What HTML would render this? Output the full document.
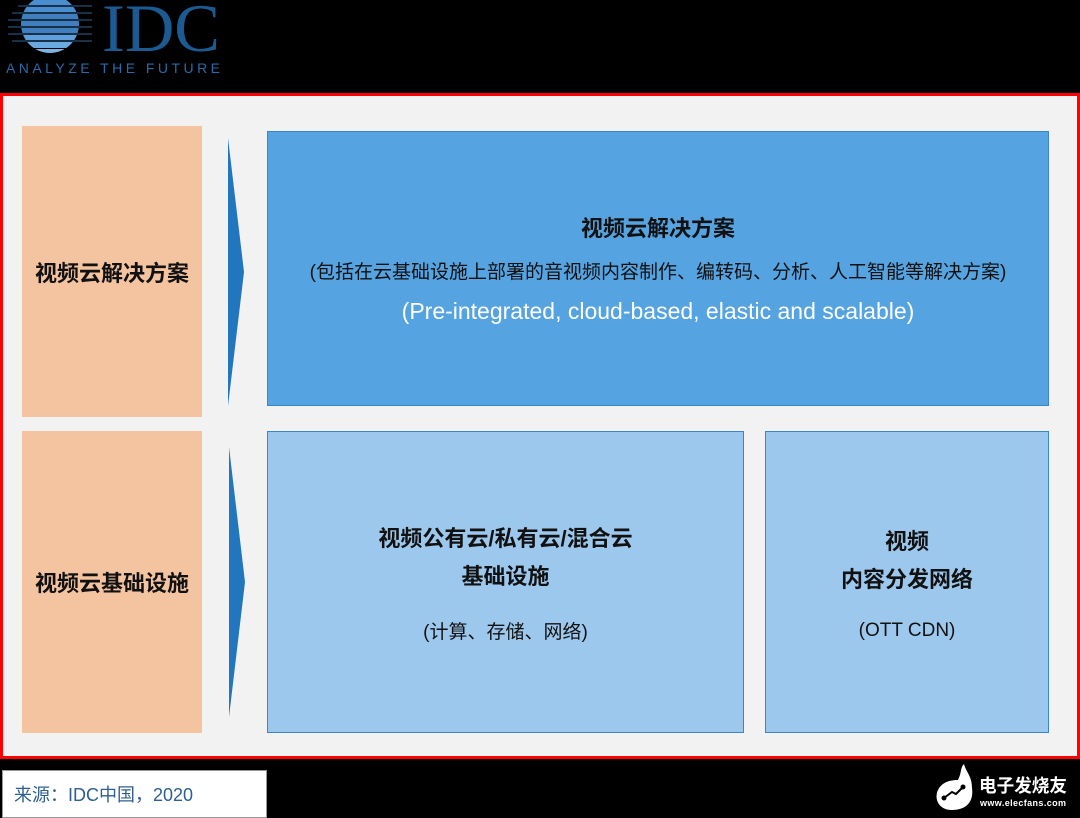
<!DOCTYPE html>
<html><head><meta charset="utf-8"><style>
body{margin:0;width:1080px;height:818px;background:#000;position:relative;overflow:hidden;font-family:"Liberation Sans","Noto Sans CJK SC",sans-serif}
.a{position:absolute;box-sizing:border-box}
.c{display:flex;flex-direction:column;align-items:center;justify-content:center;text-align:center;color:#111}
</style></head><body>
<svg class="a" style="left:0;top:0" width="240" height="92">
<defs><clipPath id="cc"><circle cx="50" cy="24" r="29"/></clipPath></defs>
<g clip-path="url(#cc)" fill="#3f7fc0">
<rect x="0" y="0" width="100" height="5" fill="#4a8ed0"/><rect x="0" y="7" width="100" height="5" fill="#4a8ed0"/><rect x="0" y="14" width="100" height="5"/><rect x="0" y="21" width="100" height="5"/><rect x="0" y="28" width="100" height="5"/><rect x="0" y="35" width="100" height="5" fill="#5fa0dc"/><rect x="0" y="42" width="100" height="6" fill="#6aaae0"/><rect x="0" y="49" width="100" height="6" fill="#7ab4e6"/>
</g>
<g stroke="#2f5f90" stroke-width="1"><line x1="18" y1="6" x2="92" y2="6"/><line x1="12" y1="13" x2="92" y2="13"/><line x1="8" y1="20" x2="92" y2="20"/><line x1="8" y1="27" x2="92" y2="27"/><line x1="8" y1="34" x2="92" y2="34"/><line x1="12" y1="41" x2="92" y2="41"/></g>
<text x="102" y="51" font-family="Liberation Serif,serif" font-size="68" fill="#1c5b92" textLength="118" lengthAdjust="spacingAndGlyphs">IDC</text>
<text x="6" y="73" font-family="Liberation Sans,sans-serif" font-size="14" fill="#2a6aa8" textLength="214" lengthAdjust="spacing">ANALYZE THE FUTURE</text>
</svg>
<div class="a" style="left:0;top:93px;width:1080px;height:666px;border:3px solid #f00;background:#f2f2f2"></div>
<div class="a c" style="left:22px;top:126px;width:180px;height:291px;background:#f4c3a0;font-size:22px;font-weight:bold">视频云解决方案</div>
<div class="a c" style="left:22px;top:431px;width:180px;height:302px;background:#f4c3a0;font-size:22px;font-weight:bold">视频云基础设施</div>
<svg class="a" style="left:0;top:0" width="300" height="760"><polygon points="228,138 244,272 228,406" fill="#2176bd"/><polygon points="229,447 245,582 229,717" fill="#2176bd"/></svg>
<div class="a c" style="left:267px;top:131px;width:782px;height:275px;background:#55a3e0;border:1px solid #3a86c8">
<div style="font-size:22px;font-weight:bold;margin-top:-2px">视频云解决方案</div>
<div style="font-size:19px;margin-top:14px">(包括在云基础设施上部署的音视频内容制作、编转码、分析、人工智能等解决方案)</div>
<div style="font-size:23px;color:#fff;margin-top:14px">(Pre-integrated, cloud-based, elastic and scalable)</div></div>
<div class="a c" style="left:267px;top:431px;width:477px;height:302px;background:#9dc8ee;border:1px solid #3a86c8">
<div style="font-size:22px;font-weight:bold;line-height:38px;margin-top:0px">视频公有云/私有云/混合云<br>基础设施</div>
<div style="font-size:19px;margin-top:21px">(计算、存储、网络)</div></div>
<div class="a c" style="left:765px;top:431px;width:284px;height:302px;background:#9dc8ee;border:1px solid #3a86c8">
<div style="font-size:22px;font-weight:bold;line-height:38px;margin-top:0px">视频<br>内容分发网络</div>
<div style="font-size:19px;margin-top:21px">(OTT CDN)</div></div>
<div class="a" style="left:2px;top:770px;width:265px;height:48px;background:#fff;border:1px solid #999;color:#2f5f90;font-size:18px;padding:10px 0 0 11px">来源：IDC中国，2020</div>
<svg class="a" style="left:930px;top:762px" width="150" height="56">
<path d="M22,48 C8,48 4,36 8,28 C12,20 20,18 28,18 C32,10 30,6 34,2 C36,10 42,14 42,26 C44,40 36,48 22,48Z" fill="#fff"/>
<path d="M14,36 L22,30 L26,32 L33,25" stroke="#000" stroke-width="2" fill="none"/><circle cx="14" cy="36" r="2.5" fill="#000"/><circle cx="33" cy="25" r="2.5" fill="#000"/>
<text x="49" y="30" font-size="18" font-weight="bold" fill="#fff" font-family="Noto Sans CJK SC,sans-serif" textLength="88" lengthAdjust="spacingAndGlyphs">电子发烧友</text>
<text x="50" y="44" font-size="9" font-weight="bold" fill="#fff" font-family="Liberation Sans,sans-serif" textLength="86">www.elecfans.com</text>
</svg>
</body></html>
